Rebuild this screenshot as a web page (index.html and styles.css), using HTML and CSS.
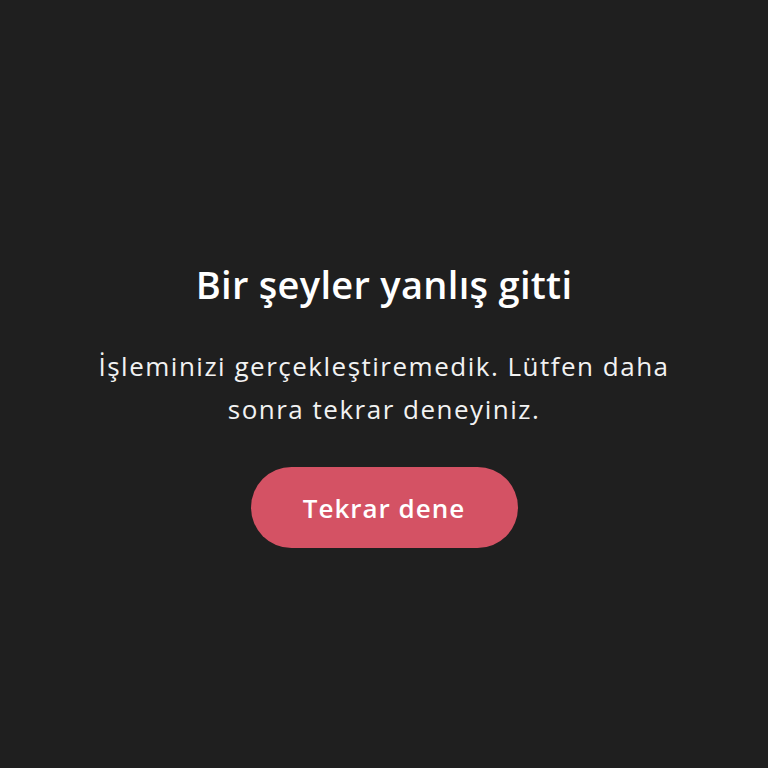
FILE: index.html
```html
<!DOCTYPE html>
<html lang="tr">
<head>
    <meta charset="UTF-8">
    <meta name="viewport" content="width=device-width, initial-scale=1.0">
    <title>Hata</title>
    <link rel="stylesheet" href="styles.css">
</head>
<body>
    <div class="error-screen">
        <h1 class="error-title">Bir şeyler yanlış gitti</h1>
        <p class="error-text">İşleminizi gerçekleştiremedik. Lütfen daha sonra tekrar deneyiniz.</p>
        <button class="retry-btn">Tekrar dene</button>
    </div>
</body>
</html>
```

FILE: styles.css
```css
* {
    margin: 0;
    padding: 0;
    box-sizing: border-box;
}

body {
    font-family: 'Open Sans', 'Noto Sans', sans-serif;
    background: #1f1f1f;
    color: #ffffff;
    min-height: 100vh;
}

.error-screen {
    display: flex;
    flex-direction: column;
    align-items: center;
    text-align: center;
    padding: 259px 60px 0;
}

.error-title {
    font-size: 38px;
    font-weight: 600;
    line-height: 50px;
    letter-spacing: 0.3px;
    margin-bottom: 36px;
}

.error-text {
    font-size: 26px;
    font-weight: 400;
    line-height: 43px;
    letter-spacing: 1.5px;
    max-width: 610px;
    color: #f2f2f2;
    margin-bottom: 36px;
}

.retry-btn {
    font-family: inherit;
    width: 267px;
    height: 81px;
    border: none;
    border-radius: 41px;
    background: #d45264;
    color: #ffffff;
    font-size: 26px;
    font-weight: 600;
    letter-spacing: 1px;
    cursor: pointer;
}
```
